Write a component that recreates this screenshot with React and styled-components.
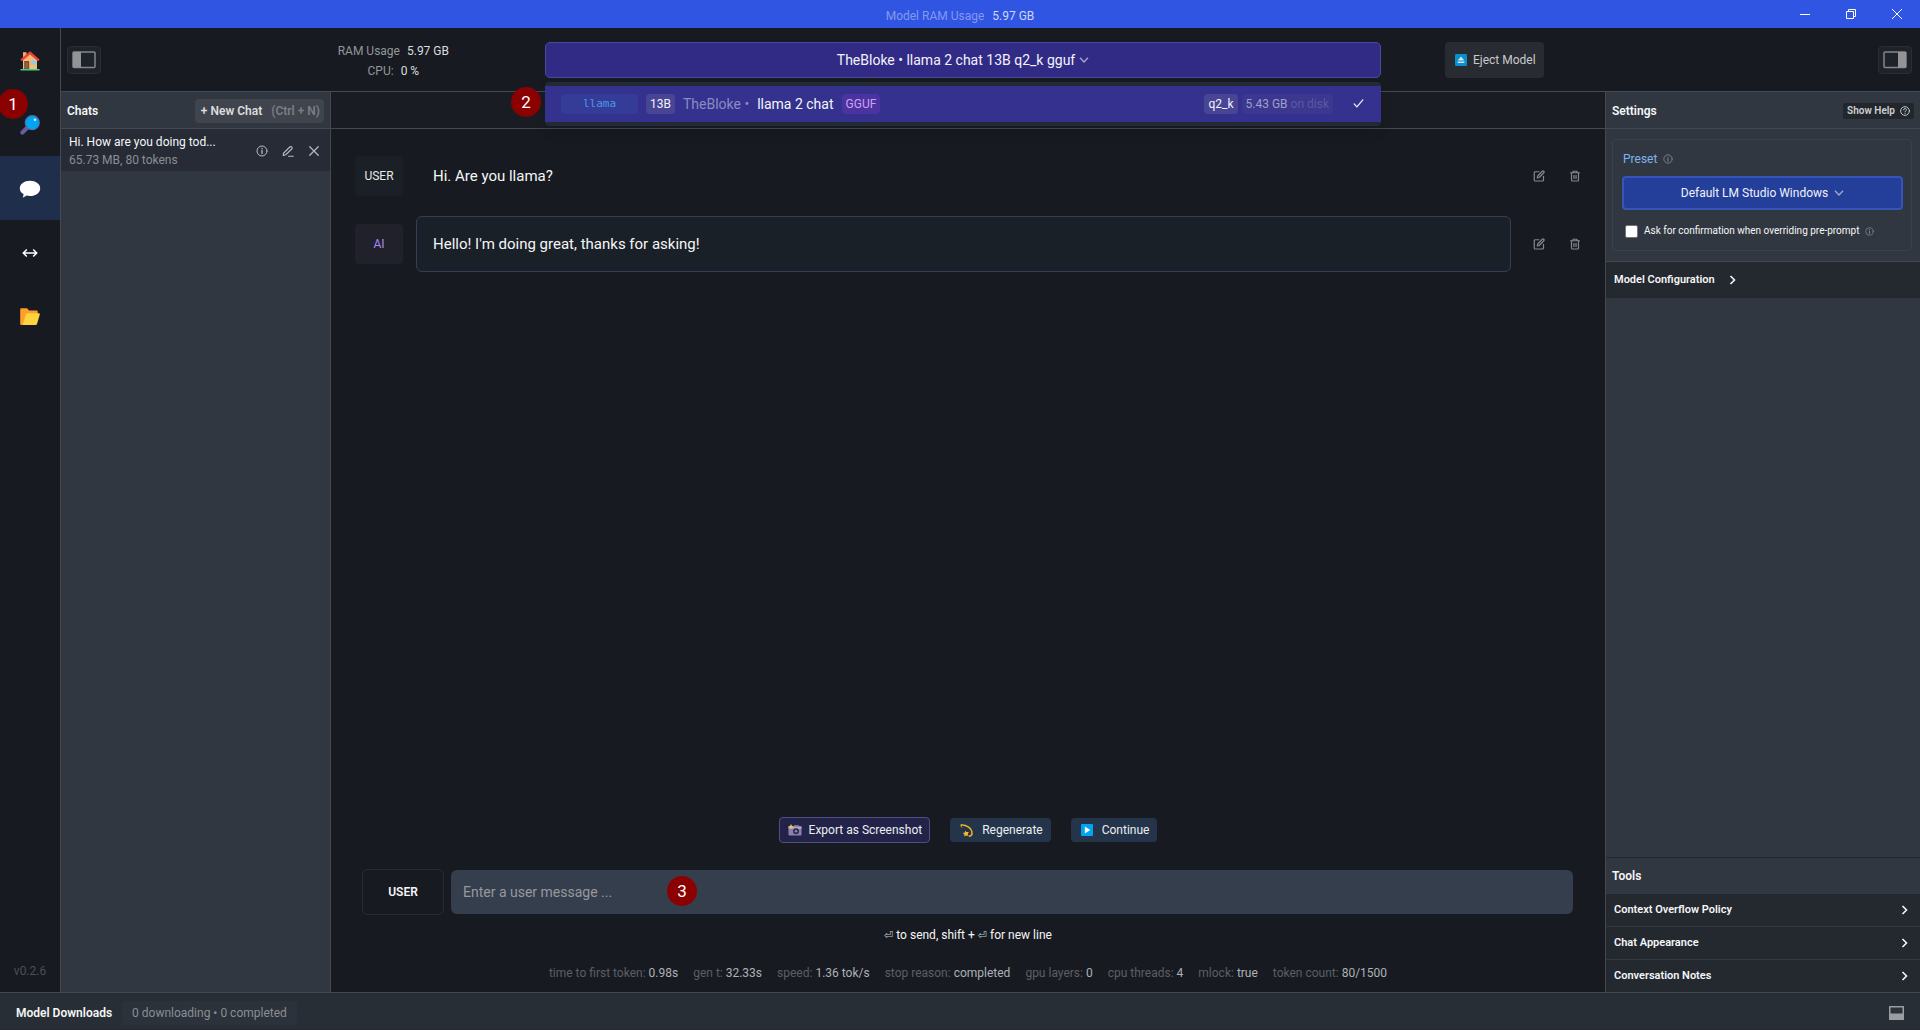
import React, { useState } from "react";
import styled, { createGlobalStyle } from "styled-components";

const color = {
  page: "#171b21",
  strip: "#191c23",
  panel: "#313740",
  line: "#454850",
  white: "#f5f6f7",
  muted: "#8b8e93",
};

const GlobalStyle = createGlobalStyle`
  *, *::before, *::after { box-sizing: border-box; }
  body {
    margin: 0;
    background: ${color.page};
    color: ${color.white};
    font: 400 12px/16px Roboto, "Noto Sans", sans-serif;
    overflow-x: hidden;
  }
  button, input, select { font: inherit; color: inherit; margin: 0; }
  button { padding: 0; border: 0; background: none; cursor: pointer; }
  svg { display: block; flex: none; }
  h2 { margin: 0; font-size: 12px; font-weight: 600; }
`;

/* ---------- window frame ---------- */

const Window = styled.div`
  display: grid;
  grid-template-rows: 28px 1fr auto;
  min-height: 100vh;
`;

const TitleBar = styled.header`
  display: grid;
  grid-template-columns: 1fr auto 1fr;
  align-items: center;
  background: #3055e3;
`;

const TitleText = styled.p`
  grid-column: 2;
  display: flex;
  gap: 8px;
  margin: 4px 0 0;
  color: #8399ef;
`;

const TitleValue = styled.span`
  color: #cdd6f9;
`;

const WindowControls = styled.div`
  display: flex;
  justify-content: flex-end;
`;

const WindowButton = styled.button`
  display: grid;
  place-items: center;
  width: 46px;
  height: 28px;
  color: #fff;
`;

const Body = styled.div`
  display: grid;
  grid-template-columns: 61px minmax(0, 1fr);
`;

/* ---------- navigation rail ---------- */

const Rail = styled.nav`
  display: flex;
  flex-direction: column;
  border-right: 1px solid ${color.line};
`;

const RailItem = styled.div`
  position: relative;
`;

const RailButton = styled.button`
  display: grid;
  place-items: center;
  width: 100%;
  height: 64px;
  padding-top: 2px;
  background: ${(p) => (p.$active ? "#1f2f4b" : "transparent")};
`;

const Version = styled.p`
  margin: auto 0 13px;
  text-align: center;
  color: #4b4f56;
`;

const Marker = styled.span`
  position: absolute;
  z-index: 3;
  top: ${(p) => p.$top}px;
  left: ${(p) => p.$left}px;
  display: grid;
  place-items: center;
  width: 30px;
  height: 30px;
  border-radius: 50%;
  background: #8b0000;
  color: #fff;
  font-size: 17px;
  line-height: 20px;
`;

/* ---------- top bar ---------- */

const Workspace = styled.div`
  display: grid;
  grid-template-rows: 64px minmax(0, 1fr);
`;

const TopBar = styled.div`
  display: grid;
  grid-template-columns: auto 444fr 836fr 497fr auto;
  align-items: center;
  padding: 0 8px 0 6px;
  border-bottom: 1px solid ${color.line};
`;

const PanelToggle = styled.button`
  display: grid;
  place-items: center;
  width: 34px;
  height: 28px;
  border: 1px solid #292d34;
  border-radius: 4px;
  background: #1e2229;
`;

const Usage = styled.dl`
  justify-self: end;
  margin: 2px 96px 0 0;
  line-height: 20px;
  color: #93969a;
`;

const UsageRow = styled.div`
  display: flex;
  justify-content: center;
  gap: 7px;
`;

const UsageValue = styled.dd`
  margin: 0;
  color: #dcdddf;
`;

const Picker = styled.div`
  position: relative;
`;

const PickerButton = styled.button`
  display: flex;
  align-items: center;
  justify-content: center;
  gap: 4px;
  width: 100%;
  height: 36px;
  border: 1px solid #4d489c;
  border-radius: 5px;
  background: #322b85;
  font-size: 14px;
  color: #f3f2fb;
`;

const PickerMenu = styled.ul`
  position: absolute;
  z-index: 2;
  top: calc(100% + 4px);
  left: 0;
  right: 0;
  margin: 0;
  padding: 4px 0;
  list-style: none;
  border-radius: 4px;
  background: #222a35;
  box-shadow: 0 6px 12px rgba(0, 0, 0, 0.12);
`;

const ModelOption = styled.li`
  display: flex;
  align-items: center;
  gap: 8px;
  height: 36px;
  padding: 0 17px 0 16px;
  background: #34318f;
  font-size: 14px;
`;

const tones = {
  arch: "background: #343c97; color: #4e97ea; font-family: 'DejaVu Sans Mono', monospace; width: 77px; font-size: 11px;",
  plain: "background: #474594; color: #f3f2fb;",
  format: "background: #4b33a0; color: #cfa2f4;",
  size: "background: #3c378f; color: #a09fca;",
};

const Tag = styled.span`
  display: inline-flex;
  align-items: center;
  justify-content: center;
  gap: 3px;
  height: 20px;
  padding: 0 4px;
  border-radius: 4px;
  font-size: 12px;
  ${(p) => tones[p.$tone]}
`;

const Publisher = styled.span`
  color: #8c8bc0;
`;

const Faint = styled.span`
  color: #5c59a4;
`;

const OptionFile = styled.span`
  display: flex;
  gap: 4px;
  margin: 0 12px 0 auto;
`;

const EjectButton = styled.button`
  display: flex;
  align-items: center;
  justify-self: start;
  gap: 6px;
  height: 36px;
  margin-left: 64px;
  padding: 0 8px 0 10px;
  border-radius: 4px;
  background: #282c32;
  color: #c9cacc;
`;

/* ---------- columns ---------- */

const Columns = styled.div`
  display: grid;
  grid-template-columns: 270px minmax(0, 1fr) 315px;
`;

const ChatPanel = styled.aside`
  border-right: 1px solid ${color.line};
  background: ${color.panel};
`;

const PanelHead = styled.div`
  display: flex;
  align-items: center;
  justify-content: space-between;
  height: 37px;
  padding: 1px 6px 0;
  border-bottom: 1px solid ${color.line};
`;

const NewChatButton = styled.button`
  display: flex;
  align-items: center;
  gap: 9px;
  height: 24px;
  padding: 0 4px 0 6px;
  border-radius: 4px;
  background: #40444c;
  color: #dcdddf;
  font-weight: 600;
`;

const Shortcut = styled.span`
  color: #7b7e84;
`;

const ChatRow = styled.div`
  display: flex;
  align-items: center;
  justify-content: space-between;
  height: 42px;
  padding: 1px 8px 0;
  background: #262b36;
  line-height: 18px;
`;

const ChatTitle = styled.div`
  color: ${color.white};
`;

const ChatMeta = styled.div`
  color: ${color.muted};
`;

const ChatActions = styled.div`
  display: flex;
  gap: 10px;
`;

const IconButton = styled.button`
  display: grid;
  place-items: center;
  width: ${(p) => p.$size}px;
  height: ${(p) => p.$size}px;
  color: ${(p) => (p.$dim ? "#85888d" : "#b9bbbf")};
`;

const Conversation = styled.main`
  display: flex;
  flex-direction: column;
`;

const Strip = styled.div`
  height: 37px;
  border-bottom: 1px solid ${color.line};
  background: ${color.strip};
`;

const Messages = styled.div`
  flex: 1;
  display: flex;
  flex-direction: column;
  gap: 12px;
  padding: 19px 18px 0 24px;
`;

const MessageRow = styled.article`
  display: flex;
  align-items: center;
  gap: 13px;
`;

const RoleButton = styled.button`
  width: 48px;
  height: 40px;
  border-radius: 4px;
  background: ${(p) => (p.$ai ? "#20212b" : "#1b1f26")};
  color: ${(p) => (p.$ai ? "#a58bf0" : "#e8e9ea")};
`;

const Bubble = styled.p`
  flex: 1;
  margin: 0;
  padding: 17px 16px;
  border: 1px solid ${(p) => (p.$ai ? "#3c3b55" : "transparent")};
  border-radius: 6px;
  background: ${(p) => (p.$ai ? "#1a2027" : "transparent")};
  font-size: 15px;
  line-height: 20px;
`;

const MessageActions = styled.div`
  display: flex;
  gap: 12px;
  margin-left: 3px;
`;

const ActionBar = styled.div`
  display: flex;
  align-items: center;
  justify-content: center;
  gap: 20px;
  margin-bottom: 26px;
`;

const ActionButton = styled.button`
  display: flex;
  align-items: center;
  gap: ${(p) => (p.$outlined ? 7 : 9)}px;
  height: ${(p) => (p.$outlined ? 26 : 24)}px;
  padding: ${(p) => (p.$outlined ? "0 7px 0 8px" : "0 8px 0 10px")};
  border: ${(p) => (p.$outlined ? "1px solid #514e80" : "0")};
  border-radius: 4px;
  background: ${(p) => (p.$outlined ? "#23234a" : "#24354b")};
  color: #eceef0;
`;

const Composer = styled.form`
  display: flex;
  align-items: center;
  gap: 7px;
  padding: 0 32px 0 31px;
`;

const SenderButton = styled.button`
  width: 82px;
  height: 46px;
  border: 1px solid #272b33;
  border-radius: 6px;
  font-weight: 600;
`;

const MessageField = styled.div`
  position: relative;
  flex: 1;
`;

const MessageInput = styled.input`
  display: block;
  width: 100%;
  height: 44px;
  padding: 0 12px;
  border: 0;
  border-radius: 6px;
  outline: 0;
  background: #353e4c;
  font-size: 14px;
  &::placeholder { color: #95999f; opacity: 1; }
`;

const Hint = styled.p`
  margin: 12px 0 21px;
  text-align: center;
`;

const KeyGlyph = styled.kbd`
  font: 11px/16px "DejaVu Sans", sans-serif;
  color: #c2c4c7;
`;

const RunStats = styled.dl`
  display: flex;
  justify-content: center;
  gap: 15px;
  margin: 0 0 11px;
  color: #5b5f65;
`;

const RunStat = styled.div`
  display: flex;
  gap: 3px;
`;

const RunValue = styled.dd`
  margin: 0;
  color: #aeb1b5;
`;

/* ---------- settings ---------- */

const SettingsPanel = styled.aside`
  display: flex;
  flex-direction: column;
  border-left: 1px solid ${color.line};
  background: ${color.panel};
`;

const HelpButton = styled.button`
  display: flex;
  align-items: center;
  gap: 5px;
  height: 16px;
  padding: 0 4px;
  border-radius: 2px;
  background: #22262d;
  color: #cfd0d2;
  font-size: 10px;
  font-weight: 600;
`;

const PresetArea = styled.div`
  padding: 10px 8px 10px 6px;
  border-bottom: 1px solid ${color.line};
`;

const PresetCard = styled.div`
  padding: 11px 8px 11px 9px;
  border: 1px solid #3d4048;
  border-radius: 4px;
`;

const PresetLabel = styled.div`
  display: flex;
  align-items: center;
  gap: 6px;
  padding-left: 1px;
  color: #7fb3ee;
`;

const PresetBox = styled.div`
  display: flex;
  align-items: center;
  justify-content: center;
  height: 34px;
  margin: 9px 0 13px;
  border: 2px solid #3556b8;
  border-radius: 4px;
  background: #233f99;
`;

const PresetSelect = styled.select`
  appearance: none;
  field-sizing: content;
  padding: 0 6px 0 0;
  border: 0;
  outline: 0;
  background: transparent;
  color: #f0f2f8;
`;

const ConfirmRow = styled.div`
  display: flex;
  align-items: center;
  gap: 6px;
  padding-left: 3px;
  font-size: 10px;
`;

const Checkbox = styled.input`
  appearance: none;
  width: 13px;
  height: 13px;
  border: 1px solid #767676;
  border-radius: 2px;
  background: #fff;
`;

const InfoMark = styled.span`
  color: #85888d;
`;

const ConfigButton = styled.button`
  display: flex;
  align-items: center;
  gap: 14px;
  height: 36px;
  padding: 0 8px;
  background: #24282f;
  font-size: 11px;
  font-weight: 600;
`;

const Tools = styled.section`
  margin-top: auto;
  border-top: 1px solid #24282f;
`;

const ToolsTitle = styled.h2`
  padding: 10px 6px 9px;
`;

const ToolButton = styled.button`
  display: flex;
  align-items: center;
  justify-content: space-between;
  width: 100%;
  height: 33px;
  padding: 0 12px 0 8px;
  border-top: 1px solid #343940;
  background: #24282f;
  font-size: 11px;
  font-weight: 600;
`;

/* ---------- footer ---------- */

const Footer = styled.footer`
  display: flex;
  align-items: center;
  gap: 10px;
  height: 38px;
  padding: 3px 16px 0;
  border-top: 1px solid ${color.line};
  border-bottom: 1px solid #2a2733;
  background: #282e35;
`;

const DownloadStatus = styled.span`
  padding: 4px 10px;
  border-radius: 4px;
  background: #2c323b;
  color: ${color.muted};
`;

const FooterToggle = styled.button`
  margin-left: auto;
`;

/* ---------- drawings ---------- */

const Stroke = ({ size = 14, width = 2, children }) => (
  <svg width={size} height={size} viewBox="0 0 24 24" fill="none" stroke="currentColor" strokeWidth={width} strokeLinecap="round" strokeLinejoin="round" aria-hidden="true">
    {children}
  </svg>
);

const ChevronDown = () => (
  <svg width="10" height="6" viewBox="0 0 10 6" fill="none" stroke="#a5a4cc" strokeWidth="1.4" aria-hidden="true">
    <path d="M1 .8 5 5 9 .8" />
  </svg>
);

const ChevronRight = () => (
  <svg width="7" height="10" viewBox="0 0 7 10" fill="none" stroke="currentColor" strokeWidth="1.6" aria-hidden="true">
    <path d="M1.500 1 5.500 5 1.500 9" />
  </svg>
);

const InfoIcon = ({ size }) => (
  <Stroke size={size} width={2}>
    <circle cx="12" cy="12" r="10" />
    <path d="M12 11v6M12 7v.4" strokeWidth="2.6" />
  </Stroke>
);

const HelpIcon = () => (
  <Stroke size={10} width={2.2}>
    <circle cx="12" cy="12" r="10.5" />
    <path d="M8.8 9.2a3.3 3.3 0 1 1 4.6 3c-1 .4-1.4 1-1.4 2M12 17.6v.3" />
  </Stroke>
);

const PencilLine = () => (
  <Stroke size={12} width={2.2}>
    <path d="M3 16.500 15.500 4a2.600 2.600 0 0 1 4 4L7.500 19.500 2.500 21zM13 22.500h9.500" />
  </Stroke>
);

const CloseIcon = () => (
  <Stroke size={12} width={2.4}>
    <path d="M3.500 3.500 20.500 20.500M20.500 3.500 3.500 20.500" />
  </Stroke>
);

const EditIcon = () => (
  <Stroke size={12} width={2.4}>
    <path d="M12 3.500H4.500a2 2 0 0 0-2 2V20a2 2 0 0 0 2 2H19a2 2 0 0 0 2-2v-7.500M18.500 2.500a2 2 0 0 1 3 3L12.500 15 8.500 16l1-4z" />
  </Stroke>
);

const TrashIcon = () => (
  <Stroke size={12} width={2.4}>
    <path d="M3 5.500h18M8 5V2.500h8V5M5 5.500V20a2 2 0 0 0 2 2h10a2 2 0 0 0 2-2V5.500" />
    <path d="M9.500 11v6M14.500 11v6M12 11v6" strokeWidth="1.8" />
  </Stroke>
);

const CheckIcon = () => (
  <Stroke size={11} width={2.6}>
    <path d="M2.500 13 8.500 19.500 21.500 4" />
  </Stroke>
);

const PanelIcon = ({ right }) => (
  <svg width="24" height="18" viewBox="0 0 24 18" aria-hidden="true">
    <rect x="1" y="1" width="22" height="15.500" rx="1" fill="none" stroke="#85878b" strokeWidth="1.500" />
    <rect x={right ? 15 : 1} y="1" width="8" height="15.500" fill="#929498" />
  </svg>
);

const BottomPanelIcon = () => (
  <svg width="15" height="14" viewBox="0 0 15 14" aria-hidden="true">
    <rect width="15" height="14" fill="#9a9da2" />
    <rect x="1.500" y="1.500" width="12" height="6" fill="#2d333b" />
  </svg>
);

const HomeEmoji = () => (
  <svg width="20" height="20" viewBox="0 0 20 20" aria-hidden="true">
    <path d="M3 1.200h3.500V7H3z" fill="#e8b06a" />
    <path d="M3 8 10 1.800 17 8v10.500H3z" fill="#f6bd72" />
    <path d="M10 .2.300 8.600 2 10.200 10 3.400l8 6.800 1.700-1.600z" fill="#f0403c" />
    <path d="M4.200 10h5v8.500h-5z" fill="#7b4a3a" />
    <path d="M5.400 11.300h2.600v6H5.400z" fill="#94604a" />
    <rect x="11.300" y="9.500" width="4.400" height="4.200" rx=".6" fill="#8cc9f5" />
    <rect x=".3" y="18" width="19.400" height="1.600" rx=".8" fill="#3bd18b" />
  </svg>
);

const SearchEmoji = () => (
  <svg width="20" height="20" viewBox="0 0 20 20" aria-hidden="true">
    <path d="M8.500 11.500 2.400 17.600" stroke="#6a5c9c" strokeWidth="4.200" strokeLinecap="round" />
    <circle cx="12.300" cy="7.700" r="7" fill="#00a6f0" stroke="#4f6fb0" strokeWidth="1.200" />
    <circle cx="15" cy="4.800" r="1.300" fill="#d6f3ff" />
  </svg>
);

const ChatEmoji = () => (
  <svg width="22" height="18" viewBox="0 0 22 18" aria-hidden="true">
    <path d="M11 .8c5.700 0 10.200 3.200 10.200 7.600S16.700 16 11 16c-1.400 0-2.600-.2-3.700-.5-1 1-2.300 1.700-3.600 1.900.6-.9.9-2 .8-3.300C2.200 12.700.8 10.700.8 8.400.8 4 5.300.8 11 .8z" fill="#fff" />
  </svg>
);

const ArrowsIcon = () => (
  <svg width="16" height="10" viewBox="0 0 16 10" fill="none" stroke="#fff" strokeWidth="1.500" aria-hidden="true">
    <path d="M1.500 5h13M4.800 1.500 1.300 5l3.500 3.500M11.200 1.500 14.700 5l-3.500 3.500" />
  </svg>
);

const FolderEmoji = () => (
  <svg width="20" height="18" viewBox="0 0 20 18" aria-hidden="true">
    <path d="M.2 1.400C.2.700.7.300 1.300.300h5.200c.4 0 .8.200 1.100.5L9 2.500h7.500c.7 0 1.200.500 1.200 1.200V12L1.500 17C.7 17 .2 16.400.2 15.700z" fill="#ff9f2a" />
    <path d="M5.900 6.200c.2-.6.700-1 1.300-1h11.600c.8 0 1.200.7 1 1.400L17 16.100c-.2.600-.7 1-1.300 1H1.500c.7 0 1.200-.4 1.400-1z" fill="#ffd23f" />
  </svg>
);

const EjectEmoji = () => (
  <svg width="12" height="12" viewBox="0 0 12 12" aria-hidden="true">
    <rect width="12" height="12" rx="1.300" fill="#078fce" />
    <path d="M6 2.500 9.400 6.600H2.600zM2.600 7.400h6.800v1.500H2.600z" fill="#cfe3ee" />
  </svg>
);

const CameraEmoji = () => (
  <svg width="14" height="12" viewBox="0 0 14 12" aria-hidden="true">
    <rect x=".5" y="2.500" width="13" height="9" rx="1" fill="#8a80b4" />
    <rect x=".5" y="2.500" width="13" height="2.200" fill="#b3adcc" />
    <rect x="6" y="1.200" width="5" height="2" fill="#8a80b4" />
    <circle cx="8" cy="7.300" r="3" fill="#2d2a3c" />
    <circle cx="8" cy="7.300" r="1.300" fill="#8e8aa8" />
    <path d="M3 0 3.800 1.800 5.800 2.500 3.800 3.300 3 5.200 2.200 3.300.2 2.500 2.200 1.800z" fill="#ffc83d" />
  </svg>
);

const DizzyEmoji = () => (
  <svg width="13" height="13" viewBox="0 0 13 13" fill="none" stroke="#f2b01e" strokeWidth="1.500" strokeLinecap="round" aria-hidden="true">
    <path d="M1.200 1C5.500.4 12 4 12 9.200c0 1.700-1 2.800-2.600 3" />
    <path d="M1.200 1C.8 1.800 1 2.600 1.500 3.200" strokeWidth="1" />
    <path d="M5.300 6.800 6.500 8l2.300.1-1 1.900.7 2-2.200-.4-1.700.9-.3-2.100-1.400-1.500 2-.4z" fill="#f9b52c" stroke="none" />
  </svg>
);

const PlayEmoji = () => (
  <svg width="12" height="12" viewBox="0 0 12 12" aria-hidden="true">
    <rect width="12" height="12" rx="1" fill="#00a4ef" />
    <path d="M3.800 2.500 9.300 6l-5.500 3.500z" fill="#fff" />
  </svg>
);

const MinimizeIcon = () => (
  <svg width="10" height="10" viewBox="0 0 10 10" stroke="currentColor" aria-hidden="true"><path d="M0 5.500h10" /></svg>
);

const RestoreIcon = () => (
  <svg width="10" height="10" viewBox="0 0 10 10" fill="none" stroke="currentColor" aria-hidden="true">
    <path d="M.5 2.500h7v7h-7zM2.500 2.500V.5h7v7h-2" />
  </svg>
);

const WindowCloseIcon = () => (
  <svg width="10" height="10" viewBox="0 0 10 10" stroke="currentColor" aria-hidden="true"><path d="M0 0 10 10M10 0 0 10" /></svg>
);

/* ---------- data ---------- */

const runStats = [
  ["time to first token:", "0.98s"],
  ["gen t:", "32.33s"],
  ["speed:", "1.36 tok/s"],
  ["stop reason:", "completed"],
  ["gpu layers:", "0"],
  ["cpu threads:", "4"],
  ["mlock:", "true"],
  ["token count:", "80/1500"],
];

const messages = [
  { role: "USER", text: "Hi. Are you llama?" },
  { role: "AI", text: "Hello! I'm doing great, thanks for asking!" },
];

const tools = ["Context Overflow Policy", "Chat Appearance", "Conversation Notes"];

const railItems = [
  { name: "Home", icon: <HomeEmoji /> },
  { name: "Search", icon: <SearchEmoji />, marker: "1" },
  { name: "Chat", icon: <ChatEmoji />, active: true },
  { name: "Local server", icon: <ArrowsIcon /> },
  { name: "My models", icon: <FolderEmoji /> },
];

export default function App() {
  const [menuOpen, setMenuOpen] = useState(true);
  const [message, setMessage] = useState("");

  return (
    <Window>
      <GlobalStyle />
      <TitleBar>
        <TitleText>
          Model RAM Usage <TitleValue>5.97 GB</TitleValue>
        </TitleText>
        <WindowControls>
          <WindowButton aria-label="Minimize"><MinimizeIcon /></WindowButton>
          <WindowButton aria-label="Restore"><RestoreIcon /></WindowButton>
          <WindowButton aria-label="Close"><WindowCloseIcon /></WindowButton>
        </WindowControls>
      </TitleBar>

      <Body>
        <Rail>
          {railItems.map((item) => (
            <RailItem key={item.name}>
              <RailButton aria-label={item.name} $active={item.active}>{item.icon}</RailButton>
              {item.marker && <Marker $top={-3} $left={-2}>{item.marker}</Marker>}
            </RailItem>
          ))}
          <Version>v0.2.6</Version>
        </Rail>

        <Workspace>
          <TopBar>
            <PanelToggle aria-label="Toggle chats"><PanelIcon /></PanelToggle>
            <Usage>
              <UsageRow><dt>RAM Usage</dt><UsageValue>5.97 GB</UsageValue></UsageRow>
              <UsageRow><dt>CPU:</dt><UsageValue>0 %</UsageValue></UsageRow>
            </Usage>
            <Picker>
              <PickerButton aria-haspopup="listbox" aria-expanded={menuOpen} onClick={() => setMenuOpen(!menuOpen)}>
                TheBloke • llama 2 chat 13B q2_k gguf <ChevronDown />
              </PickerButton>
              {menuOpen && (
                <PickerMenu role="listbox">
                  <ModelOption role="option" aria-selected="true">
                    <Tag $tone="arch">llama</Tag>
                    <Tag $tone="plain">13B</Tag>
                    <Publisher>TheBloke •</Publisher>
                    <span>llama 2 chat</span>
                    <Tag $tone="format">GGUF</Tag>
                    <OptionFile>
                      <Tag $tone="plain">q2_k</Tag>
                      <Tag $tone="size">5.43 GB <Faint>on disk</Faint></Tag>
                    </OptionFile>
                    <CheckIcon />
                  </ModelOption>
                </PickerMenu>
              )}
              <Marker $top={45} $left={-34}>2</Marker>
            </Picker>
            <EjectButton><EjectEmoji />Eject Model</EjectButton>
            <PanelToggle aria-label="Toggle settings"><PanelIcon right /></PanelToggle>
          </TopBar>

          <Columns>
            <ChatPanel>
              <PanelHead>
                <h2>Chats</h2>
                <NewChatButton>+ New Chat <Shortcut>(Ctrl + N)</Shortcut></NewChatButton>
              </PanelHead>
              <ChatRow>
                <div>
                  <ChatTitle>Hi. How are you doing tod...</ChatTitle>
                  <ChatMeta>65.73 MB, 80 tokens</ChatMeta>
                </div>
                <ChatActions>
                  <IconButton $size={16} aria-label="Chat info"><InfoIcon size={12} /></IconButton>
                  <IconButton $size={16} aria-label="Rename chat"><PencilLine /></IconButton>
                  <IconButton $size={16} aria-label="Delete chat"><CloseIcon /></IconButton>
                </ChatActions>
              </ChatRow>
            </ChatPanel>

            <Conversation>
              <Strip />
              <Messages>
                {messages.map(({ role, text }) => (
                  <MessageRow key={role}>
                    <RoleButton $ai={role === "AI"}>{role}</RoleButton>
                    <Bubble $ai={role === "AI"}>{text}</Bubble>
                    <MessageActions>
                      <IconButton $size={24} $dim aria-label="Edit message"><EditIcon /></IconButton>
                      <IconButton $size={24} $dim aria-label="Delete message"><TrashIcon /></IconButton>
                    </MessageActions>
                  </MessageRow>
                ))}
              </Messages>
              <ActionBar>
                <ActionButton $outlined><CameraEmoji />Export as Screenshot</ActionButton>
                <ActionButton><DizzyEmoji />Regenerate</ActionButton>
                <ActionButton><PlayEmoji />Continue</ActionButton>
              </ActionBar>
              <Composer onSubmit={(e) => e.preventDefault()}>
                <SenderButton type="button">USER</SenderButton>
                <MessageField>
                  <MessageInput
                    aria-label="User message"
                    placeholder="Enter a user message ..."
                    value={message}
                    onChange={(e) => setMessage(e.target.value)}
                  />
                  <Marker $top={6} $left={216}>3</Marker>
                </MessageField>
              </Composer>
              <Hint>
                <KeyGlyph>⏎</KeyGlyph> to send, shift + <KeyGlyph>⏎</KeyGlyph> for new line
              </Hint>
              <RunStats>
                {runStats.map(([label, value]) => (
                  <RunStat key={label}><dt>{label}</dt><RunValue>{value}</RunValue></RunStat>
                ))}
              </RunStats>
            </Conversation>

            <SettingsPanel>
              <PanelHead>
                <h2>Settings</h2>
                <HelpButton>Show Help <HelpIcon /></HelpButton>
              </PanelHead>
              <PresetArea>
                <PresetCard>
                  <PresetLabel>
                    <label htmlFor="preset">Preset</label>
                    <InfoMark><InfoIcon size={10} /></InfoMark>
                  </PresetLabel>
                  <PresetBox>
                    <PresetSelect id="preset" defaultValue="windows">
                      <option value="windows">Default LM Studio Windows</option>
                    </PresetSelect>
                    <ChevronDown />
                  </PresetBox>
                  <ConfirmRow>
                    <Checkbox id="confirm" type="checkbox" />
                    <label htmlFor="confirm">Ask for confirmation when overriding pre-prompt</label>
                    <InfoMark><InfoIcon size={9} /></InfoMark>
                  </ConfirmRow>
                </PresetCard>
              </PresetArea>
              <ConfigButton>Model Configuration <ChevronRight /></ConfigButton>
              <Tools>
                <ToolsTitle>Tools</ToolsTitle>
                {tools.map((name) => (
                  <ToolButton key={name}>{name}<ChevronRight /></ToolButton>
                ))}
              </Tools>
            </SettingsPanel>
          </Columns>
        </Workspace>
      </Body>

      <Footer>
        <h2>Model Downloads</h2>
        <DownloadStatus>0 downloading • 0 completed</DownloadStatus>
        <FooterToggle aria-label="Toggle downloads"><BottomPanelIcon /></FooterToggle>
      </Footer>
    </Window>
  );
}
